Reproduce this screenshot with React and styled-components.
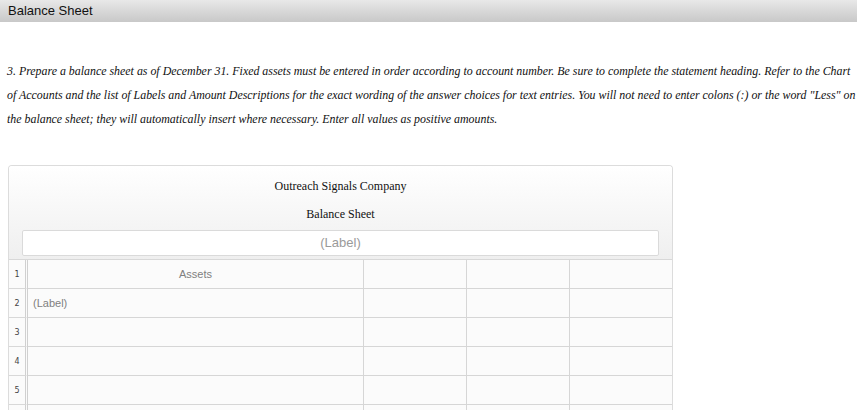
import React from 'react'
import styled, { createGlobalStyle } from 'styled-components'

const GlobalStyle = createGlobalStyle`
  body {
    margin: 0;
    background: #fff;
    font-family: 'Liberation Sans', Arial, sans-serif;
  }
`

const instructionLines = [
  '3. Prepare a balance sheet as of December 31. Fixed assets must be entered in order according to account number. Be sure to complete the statement heading. Refer to the Chart',
  'of Accounts and the list of Labels and Amount Descriptions for the exact wording of the answer choices for text entries. You will not need to enter colons (:) or the word "Less" on',
  'the balance sheet; they will automatically insert where necessary. Enter all values as positive amounts.',
]

const rows = [
  { n: 1, label: 'Assets', head: true },
  { n: 2, label: '(Label)' },
  { n: 3, label: '' },
  { n: 4, label: '' },
  { n: 5, label: '' },
  { n: 6, label: '' },
]

function App() {
  return (
    <>
      <GlobalStyle />
      <TitleBar>Balance Sheet</TitleBar>
      <Instructions>
        {instructionLines.map((line, i) => (
          <Line key={i}>{line}</Line>
        ))}
      </Instructions>
      <Card>
        <CardHead>
          <HeadLine>Outreach Signals Company</HeadLine>
          <HeadLine>Balance Sheet</HeadLine>
          <LabelBox>(Label)</LabelBox>
        </CardHead>
        <Grid>
          {rows.map((r) => (
            <React.Fragment key={r.n}>
              <RowNum>{r.n}</RowNum>
              <LabelCell $center={r.head}>{r.label}</LabelCell>
              <Cell />
              <Cell />
              <Cell $last />
            </React.Fragment>
          ))}
        </Grid>
      </Card>
    </>
  )
}

const TitleBar = styled.div`
  height: 22px;
  line-height: 22px;
  padding-left: 8px;
  font-size: 13px;
  color: #111;
  background: linear-gradient(#e8e8e8, #c8c8c8);
`

const Instructions = styled.p`
  margin: 37px 0 0;
  padding-left: 7px;
  font-family: 'Liberation Serif', 'Times New Roman', serif;
  font-style: italic;
  font-size: 11.9px;
  line-height: 24px;
  color: #111;
`

const Line = styled.span`
  display: block;
  white-space: nowrap;
`

const Card = styled.div`
  margin: 34px 0 0 8px;
  width: 665px;
  box-sizing: border-box;
  border: 1px solid #dcdcdc;
  border-bottom: none;
  border-radius: 4px 4px 0 0;
  overflow: hidden;
`

const CardHead = styled.div`
  padding: 6px 13px 3px;
  background: linear-gradient(#ffffff, #efefef);
  border-bottom: 1px solid #d8d8d8;
`

const HeadLine = styled.div`
  height: 28px;
  line-height: 28px;
  text-align: center;
  font-family: 'Liberation Serif', 'Times New Roman', serif;
  font-size: 12px;
  color: #111;
`

const LabelBox = styled.div`
  margin-top: 2px;
  height: 24px;
  line-height: 24px;
  text-align: center;
  background: #fff;
  border: 1px solid #dadada;
  border-radius: 2px;
  font-size: 13px;
  color: #9a9a9a;
`

const Grid = styled.div`
  display: grid;
  grid-template-columns: 19px 336px 103px 103px 102px;
  grid-auto-rows: 29px;
  background: #fbfbfb;
`

const RowNum = styled.div`
  box-sizing: border-box;
  border-right: 3px double #d0d0d0;
  border-bottom: 1px solid #d8d8d8;
  display: flex;
  align-items: center;
  justify-content: center;
  font-family: 'DejaVu Sans', sans-serif;
  font-size: 8px;
  color: #444;
`

const Cell = styled.div`
  box-sizing: border-box;
  border-right: ${(p) => (p.$last ? 'none' : '1px solid #d6d6d6')};
  border-bottom: 1px solid #d6d6d6;
`

const LabelCell = styled(Cell)`
  display: flex;
  align-items: center;
  justify-content: ${(p) => (p.$center ? 'center' : 'flex-start')};
  padding-left: ${(p) => (p.$center ? '0' : '5px')};
  font-size: 11px;
  color: #808080;
`

export default App
